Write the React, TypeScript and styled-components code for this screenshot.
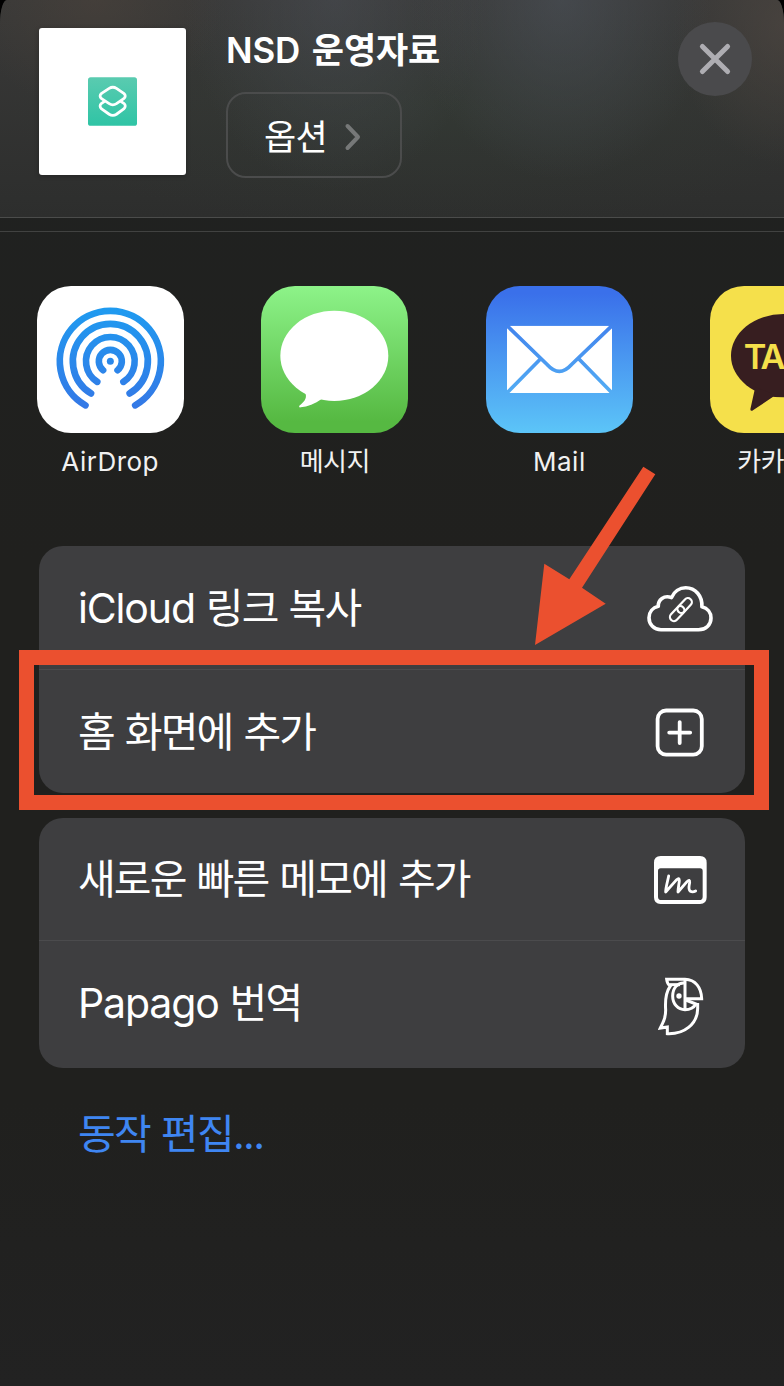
import React from "react";
import styled, { createGlobalStyle } from "styled-components";

const GlobalStyle = createGlobalStyle`
  * { box-sizing: border-box; }
  body {
    margin: 0;
    background: #000;
    font-family: Inter, "Noto Sans CJK KR", sans-serif;
    color: #fff;
  }
`;

const Sheet = styled.main`
  position: relative;
  width: 784px;
  height: 1386px;
  overflow: hidden;
  border-radius: 7px 7px 0 0 / 24px 24px 0 0;
  background: linear-gradient(180deg, #202221 0, #20201e 560px, #20201e 1100px, #222222 1386px);
`;

const Header = styled.header`
  display: flex;
  align-items: flex-start;
  height: 218px;
  padding: 28px 32px 0 39px;
  border-bottom: 1px solid #4b4c4b;
  background:
    radial-gradient(ellipse 150px 180px at 562px 0, rgba(76, 82, 90, 0.6), transparent),
    radial-gradient(ellipse 150px 190px at 335px 0, rgba(76, 80, 88, 0.5), transparent),
    radial-gradient(ellipse 130px 110px at 95px 0, rgba(78, 68, 60, 0.5), transparent),
    radial-gradient(ellipse 110px 140px at 784px 25px, rgba(80, 72, 66, 0.6), transparent),
    radial-gradient(ellipse 420px 120px at 430px 110px, rgba(50, 62, 52, 0.4), transparent),
    linear-gradient(180deg, #393938, #2d2e2d);
`;

const Preview = styled.div`
  display: flex;
  align-items: center;
  justify-content: center;
  width: 147px;
  height: 147px;
  border-radius: 3px;
  background: #fff;
  box-shadow: 0 1px 5px rgba(0, 0, 0, 0.25);
`;

const Info = styled.div`
  flex: 1;
  margin-left: 40px;
`;

const Title = styled.h1`
  margin: 0;
  height: 64px;
  font-size: 35px;
  line-height: 44px;
  font-weight: 600;
  letter-spacing: -0.15px;
  word-spacing: 3px;
  white-space: nowrap;
`;

const OptionButton = styled.button`
  display: flex;
  align-items: center;
  gap: 17px;
  width: 176px;
  height: 86px;
  padding: 0 0 0 36px;
  border: 2px solid #4b4c4c;
  border-radius: 20px;
  background: transparent;
  color: #fff;
  font: inherit;
  font-size: 35px;
  letter-spacing: -0.7px;

  span { margin-bottom: 2px; }
  svg { margin-top: 3px; }
`;

const CloseButton = styled.button`
  display: flex;
  align-items: center;
  justify-content: center;
  width: 74px;
  height: 74px;
  margin-top: -6px;
  padding: 0;
  border: 0;
  border-radius: 50%;
  background: #4a4a4c;
`;

const Divider = styled.div`
  height: 14px;
  border-bottom: 1px solid #414241;
`;

const AppRow = styled.section`
  display: flex;
  gap: 77.6px;
  height: 314px;
  padding: 54px 0 0 36.7px;
`;

const AppItem = styled.div`
  display: flex;
  flex: none;
  flex-direction: column;
  align-items: center;
  width: 147px;
`;

const AppIcon = styled.svg`
  width: 147px;
  height: 147px;
  border-radius: 34px;
`;

const AppName = styled.span<{ $spacing: number }>`
  margin-top: 11px;
  font-size: 26px;
  line-height: 36px;
  letter-spacing: ${(p) => p.$spacing}px;
  color: #f1f1f1;
  white-space: nowrap;
`;

const ActionGroup = styled.section<{ $bottom?: number }>`
  margin: 0 39px 25px;
  padding-bottom: ${(p) => p.$bottom ?? 0}px;
  border-radius: 24px;
  background: #3e3e40;
`;

const ActionRow = styled.div<{ $height?: number }>`
  display: flex;
  align-items: center;
  justify-content: space-between;
  height: ${(p) => p.$height ?? 123}px;
  padding: 0 32px 0 39px;

  & + & {
    height: 124px;
    border-top: 1px solid #4b4b4d;
  }
`;

const ActionText = styled.span`
  font-size: 41px;
  line-height: 60px;
  letter-spacing: -1.85px;
  word-spacing: 1.3px;
  white-space: nowrap;
`;

const Latin = styled.span`
  letter-spacing: -1.15px;
`;

const ActionIcon = styled.svg`
  flex: none;
  width: 66px;
  height: 66px;
  fill: none;
  stroke: #fff;
  stroke-linejoin: round;
  stroke-linecap: round;
`;

const EditLink = styled.a`
  display: block;
  margin: 36px 0 0 78px;
  font-size: 41px;
  line-height: 60px;
  letter-spacing: -1.7px;
  word-spacing: 1px;
  color: #3f86f2;
`;

const Highlight = styled.div`
  position: absolute;
  left: 19px;
  top: 650px;
  width: 750px;
  height: 160px;
  border: 15px solid #eb502f;
`;

const Arrow = styled.svg`
  position: absolute;
  left: 535px;
  top: 466px;
  width: 122px;
  height: 180px;
  fill: #eb502f;
`;

const ShortcutsLogo = () => (
  <svg width="49" height="49" viewBox="264 231 148 147">
    <defs>
      <linearGradient id="teal" x1="0" y1="0" x2="0" y2="1">
        <stop offset="0" stopColor="#5acbb0" />
        <stop offset="1" stopColor="#2fc4a5" />
      </linearGradient>
    </defs>
    <rect x="264" y="231" width="148" height="147" rx="8" fill="url(#teal)" />
    <g fill="none" stroke="#fff" strokeWidth="8.5" strokeLinejoin="round">
      <path d="M314 304 L305 310 Q296 318 305 327 L328 343 Q339 350 350 343 L372 327 Q381 318 372 310 L363 304" />
      <path d="M328 265 Q339 258 350 265 L372 280 Q381 288 372 296 L350 311 Q339 318 328 311 L305 296 Q296 288 305 280 Z" />
    </g>
  </svg>
);

/* Ring of the AirDrop mark, open at the bottom by the given half angle. */
const ring = (r: number, deg: number) => {
  const a = (deg * Math.PI) / 180;
  const dx = r * Math.sin(a);
  const y = 274 + r * Math.cos(a);
  return `M${270 - dx} ${y} A${r} ${r} 0 1 1 ${270 + dx} ${y}`;
};

const AirDropIcon = () => (
  <AppIcon viewBox="50 48 441 441">
    <defs>
      <linearGradient id="air" gradientUnits="userSpaceOnUse" x1="0" y1="113" x2="0" y2="415">
        <stop offset="0" stopColor="#1f9bf0" />
        <stop offset="1" stopColor="#3478e6" />
      </linearGradient>
    </defs>
    <rect x="50" y="48" width="441" height="441" fill="#fff" />
    <circle cx="270" cy="274" r="10.5" fill="url(#air)" />
    <g fill="none" stroke="url(#air)" strokeWidth="20" strokeLinecap="round">
      <path d={ring(151.5, 29.5)} />
      <path d={ring(112.5, 31)} />
      <path d={ring(73, 32.5)} />
      <path d={ring(34.5, 39)} />
    </g>
  </AppIcon>
);

const MessagesIcon = () => (
  <AppIcon viewBox="725 48 441 441">
    <defs>
      <linearGradient id="green" x1="0" y1="0" x2="0" y2="1">
        <stop offset="0" stopColor="#8df389" />
        <stop offset="0.92" stopColor="#56b942" />
      </linearGradient>
    </defs>
    <rect x="725" y="48" width="441" height="441" fill="url(#green)" />
    <ellipse cx="945" cy="257.5" rx="162" ry="135.5" fill="#fff" />
    <path d="M856 366 C865 380 858 394 840 407 Q837 413 844 412 C865 410 886 402 908 386 Z" fill="#fff" />
  </AppIcon>
);

const MailIcon = () => (
  <AppIcon viewBox="48 48 441 441">
    <defs>
      <linearGradient id="sky" x1="0" y1="0" x2="0" y2="1">
        <stop offset="0.05" stopColor="#3a70ea" />
        <stop offset="1" stopColor="#5cc5f8" />
      </linearGradient>
      <mask id="folds" maskUnits="userSpaceOnUse" x="48" y="48" width="441" height="441">
        <rect x="111" y="167" width="315" height="202" rx="11" fill="#fff" />
        <g fill="none" stroke="#000" strokeWidth="11">
          <path d="M110 166 L232 284 Q268 324 304 284 L427 166" />
          <path d="M212 266 L110 370 M326 266 L427 370" />
        </g>
      </mask>
    </defs>
    <rect x="48" y="48" width="441" height="441" fill="url(#sky)" />
    <rect x="111" y="167" width="315" height="202" fill="#fff" mask="url(#folds)" />
  </AppIcon>
);

const TalkIcon = () => (
  <AppIcon viewBox="722 48 441 441">
    <rect x="722" y="48" width="441" height="441" fill="#f5e04b" />
    <ellipse cx="942" cy="257" rx="157" ry="125" fill="#371e20" />
    <path d="M858 350 L843 418 Q844 426 852 420 L918 376 Z" fill="#371e20" />
    <text x="823" y="296" fontSize="103" fontWeight="600" fill="#f5e04b" textLength="240">
      TALK
    </text>
  </AppIcon>
);

const CloudLinkIcon = () => (
  <ActionIcon viewBox="647 575 66 66">
    <path
      strokeWidth="3.6"
      d="M661 629.8 C654 629.8 649 624.5 649 617.7 C649 612 652.8 607.5 658.3 606.3 C658 599.5 664 595 671.5 597.6 C674 591.5 679.5 587.8 685.7 587.8 C695.5 587.8 702.5 596 701.9 606.8 C707.5 608.2 711 612.5 711 618 C711 624.8 705.8 629.8 698.5 629.8 Z"
    />
    <g strokeWidth="2.2" transform="rotate(-47 680.9 609.6)">
      <rect x="677.7" y="605.6" width="17.4" height="8" rx="4" />
      <rect x="666.7" y="605.6" width="17.4" height="8" rx="4" />
    </g>
  </ActionIcon>
);

const AddIcon = () => (
  <ActionIcon viewBox="647 699 66 66" strokeWidth="3.8">
    <rect x="657.6" y="710.5" width="44.2" height="44.2" rx="8.5" />
    <path d="M669.2 732.6 H690.2 M679.7 722.1 V743.1" />
  </ActionIcon>
);

const QuickNoteIcon = () => (
  <ActionIcon viewBox="51 48 198 198">
    <path
      fill="#fff"
      stroke="none"
      fillRule="evenodd"
      d="M92 78 H210 Q230 78 230 98 V202 Q230 222 210 222 H92 Q72 222 72 202 V98 Q72 78 92 78 Z M92 115 Q84 115 84 123 V200 Q84 210 94 210 H208 Q218 210 218 200 V123 Q218 115 210 115 Z"
    />
    <path
      strokeWidth="8.5"
      d="M116 138 C113 154 107 172 107 186 L140 149 Q148 141 148 152 C147 164 144 174 144 186 L171 155 Q180 146 179 158 C177 168 174 180 181 184 Q188 188 197 183"
    />
  </ActionIcon>
);

const PapagoIcon = () => (
  <ActionIcon viewBox="51 418 198 198" strokeWidth="9">
    <g strokeLinejoin="miter" strokeLinecap="butt">
      <path d="M203 517 V534 C202 580 164 611 112 609 V589 L91 592 C101 572 107 560 107 538 C105 510 108 484 121 466 C114 462 111 455 110 446 H165 C196 447 214 470 215 504 H165" />
      <path d="M165 446 V540" />
      <path d="M165 457 C142 454 128 474 128 496 C128 520 144 537 165 537 C180 537 192 530 198 520 L167 508" />
      <path d="M118 462 H150" />
    </g>
    <circle cx="147" cy="496" r="8" fill="#fff" stroke="none" />
  </ActionIcon>
);

const apps = [
  { name: "AirDrop", spacing: 0.5, Icon: AirDropIcon },
  { name: "메시지", spacing: -0.6, Icon: MessagesIcon },
  { name: "Mail", spacing: 0.5, Icon: MailIcon },
  { name: "카카오톡", spacing: -0.6, Icon: TalkIcon },
];

export default function App() {
  return (
    <>
      <GlobalStyle />
      <Sheet>
        <Header>
          <Preview>
            <ShortcutsLogo />
          </Preview>
          <Info>
            <Title>NSD 운영자료</Title>
            <OptionButton>
              <span>옵션</span>
              <svg width="18" height="28" viewBox="0 0 18 28" fill="none" stroke="#767878" strokeWidth="4" strokeLinecap="round" strokeLinejoin="round">
                <path d="M3.5 3 L14 14 L3.5 25" />
              </svg>
            </OptionButton>
          </Info>
          <CloseButton aria-label="닫기">
            <svg width="34" height="34" viewBox="0 0 34 34" stroke="#aeadb2" strokeWidth="5" strokeLinecap="round">
              <path d="M4.4 4.4 L29.6 29.6 M29.6 4.4 L4.4 29.6" />
            </svg>
          </CloseButton>
        </Header>
        <Divider />
        <AppRow>
          {apps.map(({ name, spacing, Icon }) => (
            <AppItem key={name}>
              <Icon />
              <AppName $spacing={spacing}>{name}</AppName>
            </AppItem>
          ))}
        </AppRow>
        <ActionGroup>
          <ActionRow>
            <ActionText>
              <Latin>iCloud</Latin> 링크 복사
            </ActionText>
            <CloudLinkIcon />
          </ActionRow>
          <ActionRow>
            <ActionText>홈 화면에 추가</ActionText>
            <AddIcon />
          </ActionRow>
        </ActionGroup>
        <ActionGroup $bottom={4}>
          <ActionRow $height={122}>
            <ActionText>새로운 빠른 메모에 추가</ActionText>
            <QuickNoteIcon />
          </ActionRow>
          <ActionRow>
            <ActionText>
              <Latin>Papago</Latin> 번역
            </ActionText>
            <PapagoIcon />
          </ActionRow>
        </ActionGroup>
        <EditLink>동작 편집...</EditLink>
        <Highlight />
        <Arrow viewBox="535 466 122 180">
          <polygon points="643.3,466.7 655.3,474.3 582,587.7 605.7,603.7 535,645 544.3,563.7 569.3,579.3" />
        </Arrow>
      </Sheet>
    </>
  );
}
